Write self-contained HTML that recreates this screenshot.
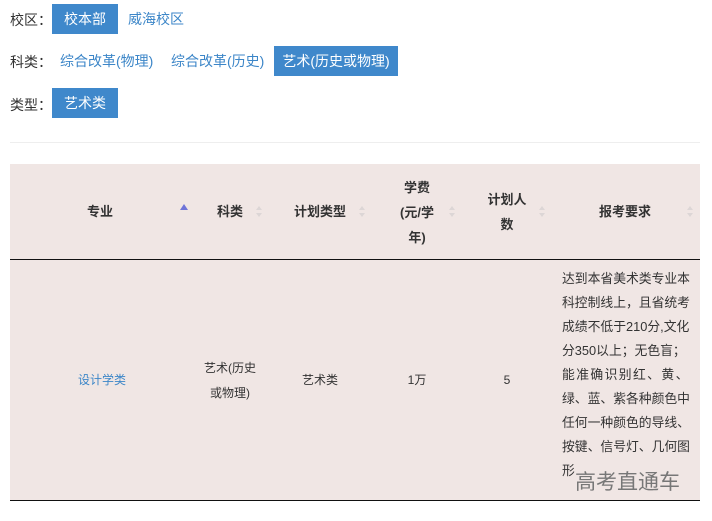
<!DOCTYPE html>
<html><head><meta charset="utf-8"><style>
*{margin:0;padding:0;box-sizing:border-box}
body{width:712px;height:521px;background:#fff;font-family:"Liberation Sans","Noto Sans CJK SC",sans-serif;font-size:13px;color:#333;position:relative;overflow:hidden}
.a{position:absolute;white-space:nowrap}
.lbl{font-size:14px;color:#333}
.btn{position:absolute;height:30px;line-height:30px;font-size:14px;color:#3c86c8;padding:0 10px}
.on{background:#3f88cb;color:#fff}
.hd{position:absolute;top:164px;left:10px;width:690px;height:95px;background:#f0e6e4}
.hl{position:absolute;top:259px;left:10px;width:690px;height:1px;background:#111}
.bd{position:absolute;top:260px;left:10px;width:690px;height:240px;background:#f0e6e4}
.bl{position:absolute;top:500px;left:10px;width:690px;height:1px;background:#111}
.th{position:absolute;font-weight:bold;font-size:13px;color:#333;text-align:center;line-height:25px}
.srt{position:absolute;width:6px;height:12px}
.srt:before{content:"";position:absolute;left:0;top:0;border-left:3px solid transparent;border-right:3px solid transparent;border-bottom:4px solid #dcd6d6}
.srt:after{content:"";position:absolute;left:0;top:7px;border-left:3px solid transparent;border-right:3px solid transparent;border-top:4px solid #dcd6d6}
.td{position:absolute;text-align:center;font-size:12px;color:#333;line-height:25px}
.rq{position:absolute;left:562px;font-size:12.8px;line-height:24px;color:#333;white-space:nowrap}
</style></head><body>
<div class="a lbl" style="left:10px;top:10px">校区：</div>
<div class="btn on" style="left:52px;top:4px;width:66px;text-align:center">校本部</div>
<div class="btn" style="left:118px;top:4px">威海校区</div>
<div class="a lbl" style="left:10px;top:52px">科类：</div>
<div class="btn" style="left:50px;top:46px">综合改革(物理)</div>
<div class="btn" style="left:161px;top:46px">综合改革(历史)</div>
<div class="btn on" style="left:274px;top:46px;width:124px;text-align:center;padding:0">艺术(历史或物理)</div>
<div class="a lbl" style="left:10px;top:95px">类型：</div>
<div class="btn on" style="left:52px;top:88px;width:66px;text-align:center">艺术类</div>
<div class="a" style="left:10px;top:142px;width:690px;height:1px;background:#eee"></div>
<div class="hd"></div><div class="hl"></div><div class="bd"></div><div class="bl"></div>
<div class="th" style="left:60px;width:80px;top:199px">专业</div>
<div class="a" style="left:180px;top:204px;border-left:4px solid transparent;border-right:4px solid transparent;border-bottom:6px solid #6f74d8"></div>
<div class="th" style="left:200px;width:60px;top:199px">科类</div><div class="srt" style="left:256px;top:206px"></div>
<div class="th" style="left:280px;width:80px;top:199px">计划类型</div><div class="srt" style="left:359px;top:206px"></div>
<div class="th" style="left:392px;width:50px;top:175px">学费<br>(元/学<br>年)</div><div class="srt" style="left:449px;top:206px"></div>
<div class="th" style="left:477px;width:60px;top:187px">计划人<br>数</div><div class="srt" style="left:539px;top:206px"></div>
<div class="th" style="left:580px;width:90px;top:199px">报考要求</div><div class="srt" style="left:687px;top:206px"></div>
<div class="td" style="left:62px;width:80px;top:368px;color:#3c86c8">设计学类</div>
<div class="td" style="left:195px;width:70px;top:356px">艺术(历史<br>或物理)</div>
<div class="td" style="left:280px;width:80px;top:368px">艺术类</div>
<div class="td" style="left:392px;width:50px;top:368px">1万</div>
<div class="td" style="left:492px;width:30px;top:368px">5</div>
<div class="rq" style="top:267px">达到本省美术类专业本</div>
<div class="rq" style="top:291px">科控制线上，且省统考</div>
<div class="rq" style="top:315px">成绩不低于210分,文化</div>
<div class="rq" style="top:339px">分350以上；无色盲；</div>
<div class="rq" style="top:363px;letter-spacing:1.4px">能准确识别红、黄、</div>
<div class="rq" style="top:387px">绿、蓝、紫各种颜色中</div>
<div class="rq" style="top:411px">任何一种颜色的导线、</div>
<div class="rq" style="top:435px">按键、信号灯、几何图</div>
<div class="rq" style="top:459px">形</div>
<div class="a" style="left:575px;top:466px;font-size:21px;color:#777">高考直通车</div>
</body></html>
